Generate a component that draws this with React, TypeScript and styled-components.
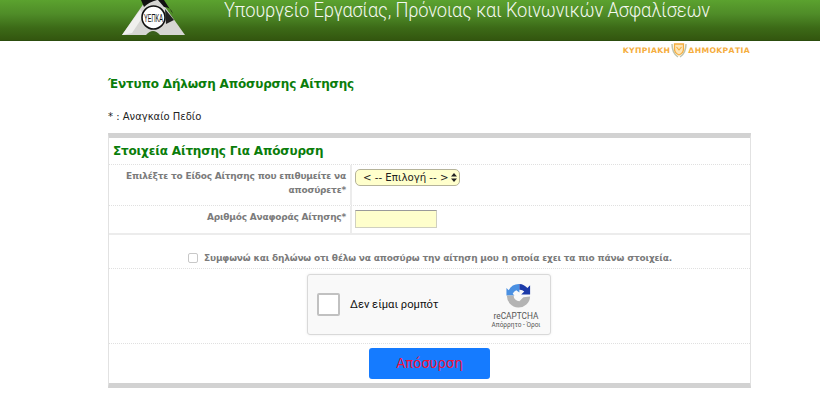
import React from "react";
import styled, { createGlobalStyle } from "styled-components";

const Global = createGlobalStyle`
  html, body { margin: 0; padding: 0; background: #fff; overflow: hidden; }
  body { font-family: "DejaVu Sans", Verdana, sans-serif; }
`;

const Page = styled.div`
  width: 820px;
  height: 400px;
  overflow: hidden;
`;

const Banner = styled.header`
  height: 41px;
  box-sizing: border-box;
  border-bottom: 1px solid #2c4d0e;
  background: linear-gradient(#5ba22f 0%, #4f8c28 35%, #3c6a17 70%, #33560f 100%);
  display: flex;
  align-items: flex-start;
  padding-left: 122px;
  overflow: hidden;
`;

const BannerTitle = styled.div`
  margin-left: 38px;
  font-family: Roboto, sans-serif;
  font-weight: 300;
  font-size: 21px;
  line-height: 20px;
  color: #f4f8ef;
  white-space: nowrap;
  letter-spacing: -0.15px;
  transform: scaleX(0.87);
  transform-origin: left center;
`;

const RepublicRow = styled.div`
  height: 18px;
  padding-right: 70px;
  display: flex;
  justify-content: flex-end;
  align-items: center;
  gap: 1px;
  font-family: "DejaVu Sans", sans-serif;
  font-weight: 700;
  font-size: 7.7px;
  letter-spacing: 0.35px;
  color: #f5ad3d;
`;

const Main = styled.main`
  margin-left: 108px;
  width: 643px;
`;

const PageHeading = styled.h1`
  margin: 17px 0 0;
  font-size: 12px;
  line-height: 16px;
  font-weight: 700;
  letter-spacing: -0.17px;
  color: #0a7d0a;
`;

const RequiredNote = styled.p`
  margin: 18px 0 0;
  font-size: 10px;
  line-height: 14px;
  color: #222;
`;

const FormCard = styled.form`
  margin: 9px 0 0;
  width: 643px;
  box-sizing: border-box;
  border-left: 1px solid #e2e2e2;
  border-right: 1px solid #e2e2e2;
  border-top: 5px solid #d2d2d2;
  border-bottom: 5px solid #d2d2d2;
`;

const SectionTitle = styled.h2`
  margin: 0;
  height: 27px;
  box-sizing: border-box;
  padding-left: 4px;
  display: flex;
  align-items: center;
  font-size: 12px;
  font-weight: 700;
  letter-spacing: -0.17px;
  color: #0a7d0a;
  border-bottom: 1px dotted #e0e0e0;
`;

const FieldRow = styled.div<{ $height: number; $strong?: boolean }>`
  height: ${(p) => p.$height}px;
  display: grid;
  grid-template-columns: 243px 1fr;
  border-bottom: ${(p) => (p.$strong ? "2px solid #ececec" : "1px dotted #e0e0e0")};
`;

const FieldLabel = styled.label`
  padding: 5px 4px 0 10px;
  text-align: right;
  font-size: 9px;
  line-height: 13.5px;
  font-weight: 700;
  letter-spacing: -0.2px;
  color: #7b7b7b;
  border-right: 2px solid #ececec;
`;

const FieldControl = styled.div`
  padding: 4px 0 0 3px;
`;

const SelectWrap = styled.div`
  position: relative;
  width: 105px;
  height: 17px;
`;

const Select = styled.select`
  appearance: none;
  display: block;
  width: 105px;
  height: 17px;
  box-sizing: border-box;
  padding: 0 0 0 7px;
  font-family: "DejaVu Sans", sans-serif;
  font-size: 10.2px;
  color: #222;
  background: #ffffcc;
  border: 1px solid #b5b39a;
  border-radius: 5px;
`;

const SelectArrows = styled.svg`
  position: absolute;
  right: 3px;
  top: 4px;
  pointer-events: none;
`;

const TextInput = styled.input`
  display: block;
  width: 82px;
  height: 18px;
  box-sizing: border-box;
  background: #ffffcc;
  border: 1px solid #d0d0c0;
  border-top: 1px solid #9a9a9a;
  padding: 0;
`;

const AgreeRow = styled.div`
  height: 34px;
  box-sizing: border-box;
  padding-top: 13px;
  padding-left: 79px;
  display: flex;
  align-items: center;
  gap: 6px;
  border-bottom: 1px dotted #e0e0e0;
`;

const AgreeBox = styled.input`
  appearance: none;
  margin: 0;
  width: 10px;
  height: 10px;
  box-sizing: border-box;
  background: #fff;
  border: 1px solid #c8c8c8;
  border-radius: 2px;
`;

const AgreeText = styled.label`
  font-size: 9px;
  font-weight: 700;
  letter-spacing: -0.17px;
  color: #7b7b7b;
  white-space: nowrap;
`;

const CaptchaRow = styled.div`
  height: 75px;
  display: flex;
  justify-content: center;
  padding: 5px 1px 0 0;
  box-sizing: border-box;
  border-bottom: 1px dotted #e0e0e0;
`;

const Captcha = styled.div`
  width: 244px;
  height: 61px;
  box-sizing: border-box;
  background: #f9f9f9;
  border: 1px solid #d9d9d9;
  border-radius: 3px;
  box-shadow: 0 0 3px rgba(0, 0, 0, 0.08);
  display: flex;
  align-items: center;
  padding: 0 9px;
`;

const CaptchaBox = styled.span`
  width: 23px;
  height: 23px;
  box-sizing: border-box;
  flex: none;
  background: #fff;
  border: 2px solid #c1c1c1;
  border-radius: 2px;
`;

const CaptchaLabel = styled.span`
  margin-left: 10px;
  flex: 1;
  font-family: Roboto, sans-serif;
  font-size: 11.2px;
  color: #111;
  white-space: nowrap;
`;

const CaptchaBrand = styled.div`
  width: 50px;
  margin-top: 4px;
  display: flex;
  flex-direction: column;
  align-items: center;
  font-family: Roboto, sans-serif;
  color: #555;
`;

const MarkSvg = styled.svg`
  margin-left: 5px;
`;

const BrandName = styled.span`
  font-size: 8.3px;
  line-height: 10px;
  margin-top: 3px;
`;

const BrandLinks = styled.span`
  font-size: 6.5px;
  line-height: 9px;
  white-space: nowrap;
`;

const ButtonRow = styled.div`
  height: 39px;
  display: flex;
  justify-content: center;
  padding-top: 4px;
  box-sizing: border-box;
`;

const SubmitButton = styled.button`
  width: 121px;
  height: 31px;
  border: 0;
  border-radius: 3px;
  background: #157bff;
  color: #f0133a;
  font-family: "DejaVu Sans", sans-serif;
  font-size: 13.3px;
  padding: 0;
`;

const MinistryLogo = () => (
  <svg width="64" height="36" viewBox="0 0 64 36" style={{ flex: "none" }}>
    <polygon points="31,-10 63,35 0,35" fill="#d6d6d3" />
    <path d="M0 35 L18 10 L22 15 L10 33Z" fill="#f0f0ee" />
    <path d="M19 0 H35 Q27 2 22 7Z" fill="#111" />
    <path d="M36 0 H42 L51 14 Q49 7 42 7Z" fill="#111" />
    <path d="M43 9 L52 20 L44 24Z" fill="#222" />
    <path d="M24 35 Q31 27 38 35Z" fill="#3a5f1b" />
    <circle cx="31.5" cy="17.5" r="11.5" fill="#fff" stroke="#111" strokeWidth="1.6" />
    <text x="31.5" y="21.5" textAnchor="middle" fontFamily="Liberation Sans, sans-serif" fontSize="10" textLength="19" lengthAdjust="spacingAndGlyphs" fill="#111">ΥΕΠΚΑ</text>
  </svg>
);

const Crest = () => (
  <svg width="16" height="15" viewBox="0 0 16 15">
    <path d="M1 1 Q1 10 7 14" fill="none" stroke="#bfc4ac" strokeWidth="1.5" />
    <path d="M15 1 Q15 10 9 14" fill="none" stroke="#bfc4ac" strokeWidth="1.5" />
    <path d="M3.5 1 H12.5 V6 Q12.5 10 8 12 Q3.5 10 3.5 6Z" fill="#fde6b8" stroke="#f5ad3d" strokeWidth="1.3" />
    <path d="M5.5 4 L8 7 L10.5 4" fill="none" stroke="#f5ad3d" strokeWidth="1.1" />
  </svg>
);

const RecaptchaMark = () => (
  <MarkSvg width="25" height="25" viewBox="0 0 28 28">
    <path d="M15 1 A13 13 0 0 0 3 8 L0.5 5.5 V14 H9.5 L7.5 12 A7 7 0 0 1 11.5 8 L15 10.5 Z" fill="#4a90e2" />
    <path d="M15 1 A13 13 0 0 1 24 5.5 L27 2.5 V13 H17 L20.5 9.5 A7 7 0 0 0 15 7.5 Z" fill="#1c3aa9" />
    <path d="M1 14 H8.5 A6.5 6.5 0 0 0 15 20.5 L19.5 16 L27 15 A13 13 0 0 1 1 14 Z" fill="#b4b4b4" />
  </MarkSvg>
);

export default function App() {
  return (
    <Page>
      <Global />
      <Banner>
        <MinistryLogo />
        <BannerTitle>Υπουργείο Εργασίας, Πρόνοιας και Κοινωνικών Ασφαλίσεων</BannerTitle>
      </Banner>
      <RepublicRow>
        <span>ΚΥΠΡΙΑΚΗ</span>
        <Crest />
        <span>ΔΗΜΟΚΡΑΤΙΑ</span>
      </RepublicRow>
      <Main>
        <PageHeading>Έντυπο Δήλωση Απόσυρσης Αίτησης</PageHeading>
        <RequiredNote>* : Αναγκαίο Πεδίο</RequiredNote>
        <FormCard>
          <SectionTitle>Στοιχεία Αίτησης Για Απόσυρση</SectionTitle>
          <FieldRow $height={40}>
            <FieldLabel>Επιλέξτε το Είδος Αίτησης που επιθυμείτε να αποσύρετε*</FieldLabel>
            <FieldControl>
              <SelectWrap>
                <Select defaultValue="">
                  <option value="">{"< -- Επιλογή -- >"}</option>
                </Select>
                <SelectArrows width="6" height="9" viewBox="0 0 6 9">
                  <path d="M3 0 L6 3.5 H0Z M3 9 L0 5.5 H6Z" fill="#222" />
                </SelectArrows>
              </SelectWrap>
            </FieldControl>
          </FieldRow>
          <FieldRow $height={27} $strong>
            <FieldLabel>Αριθμός Αναφοράς Αίτησης*</FieldLabel>
            <FieldControl>
              <TextInput type="text" />
            </FieldControl>
          </FieldRow>
          <AgreeRow>
            <AgreeBox type="checkbox" />
            <AgreeText>Συμφωνώ και δηλώνω οτι θέλω να αποσύρω την αίτηση μου η οποία εχει τα πιο πάνω στοιχεία.</AgreeText>
          </AgreeRow>
          <CaptchaRow>
            <Captcha>
              <CaptchaBox />
              <CaptchaLabel>Δεν είμαι ρομπότ</CaptchaLabel>
              <CaptchaBrand>
                <RecaptchaMark />
                <BrandName>reCAPTCHA</BrandName>
                <BrandLinks>Απόρρητο - Όροι</BrandLinks>
              </CaptchaBrand>
            </Captcha>
          </CaptchaRow>
          <ButtonRow>
            <SubmitButton type="button">Απόσυρση</SubmitButton>
          </ButtonRow>
        </FormCard>
      </Main>
    </Page>
  );
}
